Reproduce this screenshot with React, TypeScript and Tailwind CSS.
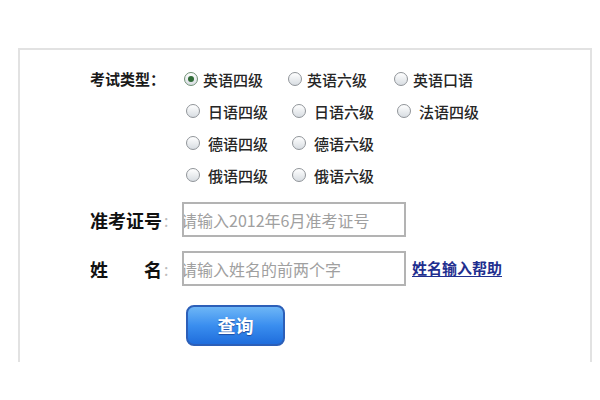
import React from "react";

const font = { fontFamily: '"Noto Sans CJK SC", "Noto Sans", sans-serif' };

function Radio({ checked = false }: { checked?: boolean }) {
  return (
    <span
      className={
        "relative inline-flex h-[14px] w-[14px] shrink-0 items-center justify-center rounded-full border bg-gradient-to-b from-[#ffffff] to-[#d8dde2] " +
        (checked ? "border-[#6f8f74]" : "border-[#909499]")
      }
    >
      {checked && <span className="h-[6px] w-[6px] rounded-full bg-[#2f6b36]" />}
    </span>
  );
}

function Option({ label, checked, gap, width }: { label: string; checked?: boolean; gap: string; width: string }) {
  return (
    <div className={"flex items-center " + gap + " " + width}>
      <Radio checked={checked} />
      <span className="text-[15px] font-medium leading-none text-[#262626]">{label}</span>
    </div>
  );
}

export default function App() {
  const rows: string[][] = [
    ["日语四级", "日语六级", "法语四级"],
    ["德语四级", "德语六级"],
    ["俄语四级", "俄语六级"],
  ];
  return (
    <div className="h-[400px] w-[600px] bg-white" style={font}>
      <div className="h-[48px]" />
      <div className="ml-[18px] h-[314px] w-[574px] border-2 border-b-0 border-[#e2e2e2] pl-[70px] pt-[13px]">
        {/* exam type */}
        <div className="flex">
          <div className="flex h-[32px] w-[94px] items-center text-[15px] font-bold text-[#1a1a1a]">考试类型：</div>
          <div className="flex flex-col">
            <div className="flex h-[32px] items-center">
              <Option label="英语四级" checked gap="gap-[5px]" width="w-[104px]" />
              <Option label="英语六级" gap="gap-[5px]" width="w-[106px]" />
              <Option label="英语口语" gap="gap-[5px]" width="w-[104px]" />
            </div>
            {rows.map((r, i) => (
              <div key={i} className="flex h-[32px] items-center pl-[2px]">
                {r.map((l, j) => (
                  <Option key={j} label={l} gap="gap-[8px]" width={j === 0 ? "w-[106px]" : "w-[105px]"} />
                ))}
              </div>
            ))}
          </div>
        </div>

        {/* ticket number */}
        <div className="mt-[11px] flex items-center">
          <div className="flex w-[92px] items-center">
            <span className="text-[18px] font-bold leading-none text-[#111111]">准考证号</span>
            <span className="ml-[2px] text-[16px] leading-none text-[#bbbbbb]">:</span>
          </div>
          <input
            readOnly
            placeholder="请输入2012年6月准考证号"
            className="h-[35px] w-[224px] border-2 border-[#b3b3b3] bg-white px-0 indent-[-3px] text-[16px] text-[#999999] outline-none placeholder:text-[#a0a0a0]"
            style={font}
          />
        </div>

        {/* name */}
        <div className="mt-[14px] flex items-center">
          <div className="flex w-[92px] items-center">
            <div className="flex w-[72px] justify-between text-[18px] font-bold leading-none text-[#111111]">
              <span>姓</span>
              <span>名</span>
            </div>
            <span className="ml-[2px] text-[16px] leading-none text-[#bbbbbb]">:</span>
          </div>
          <input
            readOnly
            placeholder="请输入姓名的前两个字"
            className="h-[35px] w-[224px] border-2 border-[#b3b3b3] bg-white px-0 indent-[-3px] text-[16px] text-[#999999] outline-none placeholder:text-[#a0a0a0]"
            style={font}
          />
          <a className="ml-[6px] text-[15px] font-bold text-[#1f2f8f] underline underline-offset-2">姓名输入帮助</a>
        </div>

        {/* button */}
        <div className="mt-[19px] pl-[96px]">
          <button
            className="flex h-[41px] w-[99px] items-center justify-center rounded-[8px] border-2 border-[#2c5fb8] bg-gradient-to-b from-[#6db6f6] via-[#3a8eef] to-[#1f6ddc] text-[18px] font-bold text-white [text-shadow:0_1px_1px_rgba(0,0,60,0.4)]"
            style={font}
          >
            查询
          </button>
        </div>
      </div>
    </div>
  );
}
